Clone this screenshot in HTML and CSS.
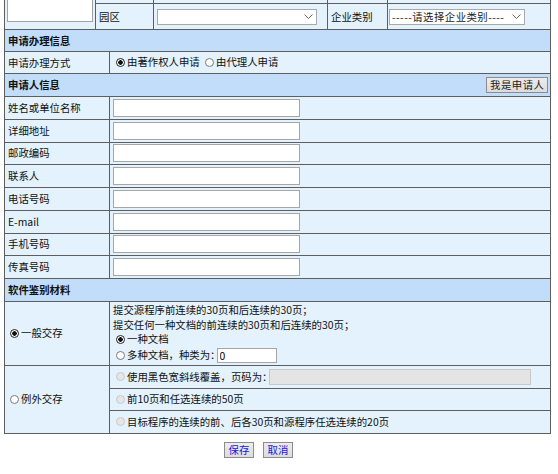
FILE: index.html
```html
<!DOCTYPE html>
<html lang="zh-CN">
<head>
<meta charset="utf-8">
<title>软件登记申请</title>
<link rel="stylesheet" href="styles.css">
</head>
<body>
<div class="page">
  <table class="form">
    <colgroup>
      <col class="c1"><col class="c2"><col class="c3"><col class="c4"><col class="c5"><col class="c6">
    </colgroup>
    <tr class="r-prev">
      <td rowspan="2" class="photo-cell"><div class="photo"></div></td>
      <td colspan="2"></td><td></td><td></td><td></td>
    </tr>
    <tr class="r-park">
      <td colspan="2">园区</td>
      <td><div class="select sel-park"><span></span><svg class="chev" width="9" height="5" viewBox="0 0 9 5"><polyline points="0.5,0.5 4.5,4.5 8.5,0.5" fill="none" stroke="#666" stroke-width="1"/></svg></div></td>
      <td>企业类别</td>
      <td class="sel-cell"><div class="select sel-type"><span>-----请选择企业类别----</span><svg class="chev" width="9" height="5" viewBox="0 0 9 5"><polyline points="0.5,0.5 4.5,4.5 8.5,0.5" fill="none" stroke="#666" stroke-width="1"/></svg></div></td>
    </tr>
    <tr class="r-head"><td colspan="6" class="head">申请办理信息</td></tr>
    <tr class="r-row">
      <td colspan="2">申请办理方式</td>
      <td colspan="4">
        <label class="opt"><input type="radio" name="way" checked>由著作权人申请</label>
        <label class="opt"><input type="radio" name="way">由代理人申请</label>
      </td>
    </tr>
    <tr class="r-head2">
      <td colspan="6" class="head"><div class="head-bar"><span>申请人信息</span><button class="btn btn-me" type="button">我是申请人</button></div></td>
    </tr>
    <tr class="r-field"><td colspan="2">姓名或单位名称</td><td colspan="4"><input class="text" type="text"></td></tr>
    <tr class="r-field"><td colspan="2">详细地址</td><td colspan="4"><input class="text" type="text"></td></tr>
    <tr class="r-field"><td colspan="2">邮政编码</td><td colspan="4"><input class="text" type="text"></td></tr>
    <tr class="r-field"><td colspan="2">联系人</td><td colspan="4"><input class="text" type="text"></td></tr>
    <tr class="r-field"><td colspan="2">电话号码</td><td colspan="4"><input class="text" type="text"></td></tr>
    <tr class="r-field"><td colspan="2">E-mail</td><td colspan="4"><input class="text" type="text"></td></tr>
    <tr class="r-field"><td colspan="2">手机号码</td><td colspan="4"><input class="text" type="text"></td></tr>
    <tr class="r-field"><td colspan="2">传真号码</td><td colspan="4"><input class="text" type="text"></td></tr>
    <tr class="r-head3"><td colspan="6" class="head">软件鉴别材料</td></tr>
    <tr class="r-general">
      <td colspan="2" class="side"><label class="opt"><input type="radio" name="dep" checked>一般交存</label></td>
      <td colspan="4" class="detail">
        <div class="line">提交源程序前连续的30页和后连续的30页；</div>
        <div class="line">提交任何一种文档的前连续的30页和后连续的30页；</div>
        <div class="line"><label class="opt"><input type="radio" name="docs" checked>一种文档</label></div>
        <div class="line line-count"><label class="opt"><input type="radio" name="docs">多种文档，种类为：</label><input class="count" type="text" value="0"></div>
      </td>
    </tr>
    <tr class="r-exc">
      <td colspan="2" rowspan="3" class="side"><label class="opt"><input type="radio" name="dep">例外交存</label></td>
      <td colspan="4"><div class="exc-line"><label class="opt"><input type="radio" name="exc" disabled>使用黑色宽斜线覆盖，页码为：</label><input class="pages" type="text" disabled></div></td>
    </tr>
    <tr class="r-exc"><td colspan="4"><label class="opt"><input type="radio" name="exc" disabled>前10页和任选连续的50页</label></td></tr>
    <tr class="r-exc"><td colspan="4"><label class="opt"><input type="radio" name="exc" disabled>目标程序的连续的前、后各30页和源程序任选连续的20页</label></td></tr>
  </table>
  <div class="actions">
    <button class="btn btn-act" type="button">保存</button>
    <button class="btn btn-act" type="button">取消</button>
  </div>
</div>
</body>
</html>
```
FILE: styles.css
```css
html, body {
  margin: 0;
  padding: 0;
  background: #ffffff;
}
body {
  font-family: "Noto Sans CJK SC", "Noto Sans", sans-serif;
  font-size: 10.4px;
  color: #111;
}
.page {
  margin: -19px 0 0 4px;
  width: 546px;
}
.form {
  border-collapse: collapse;
  table-layout: fixed;
  width: 546px;
}
.c1 { width: 91px; }
.c2 { width: 14px; }
.c3 { width: 44px; }
.c4 { width: 174px; }
.c5 { width: 60px; }
.c6 { width: 163px; }
.form td {
  border: 1px solid #5e5e5e;
  background: #e3f2fd;
  padding: 0 3px;
  line-height: 14px;
  vertical-align: middle;
  white-space: nowrap;
}
.form td.head {
  background: #c1ddfa;
  font-weight: bold;
}
.r-prev { height: 22px; }
.r-park { height: 26px; }
.r-head { height: 22px; }
.r-row { height: 22px; }
.r-head2 { height: 23px; }
.r-field { height: 22.75px; }
.r-head3 { height: 23px; }
.r-general { height: 64px; }
.r-exc { height: 22.67px; }
.form td.photo-cell {
  vertical-align: top;
  padding: 2px 2px;
}
.photo {
  height: 38px;
  border: 1px solid #a3a3a3;
  background: #fff;
  box-sizing: border-box;
}
.form td.sel-cell {
  padding-left: 1px;
}
.select {
  display: flex;
  align-items: center;
  justify-content: space-between;
  height: 16px;
  box-sizing: border-box;
  border: 1px solid #a9a9a9;
  background: #fff;
  padding: 0 3px 0 2px;
  font-size: 10.4px;
  line-height: 14px;
  color: #222;
}
.sel-park { width: 160px; }
.sel-type { width: 136px; letter-spacing: 0.45px; }
.chev { flex: none; }
.opt {
  display: inline-flex;
  align-items: center;
}
input[type="radio"] {
  appearance: none;
  -webkit-appearance: none;
  width: 9px;
  height: 9px;
  margin: 0 2px 0 3px;
  border: 1px solid #7a7a7a;
  border-radius: 50%;
  background: #fff;
  box-sizing: border-box;
  flex: none;
}
input[type="radio"]:checked {
  border-color: #222;
  background: radial-gradient(circle, #111 0 2px, #fff 2.5px);
}
input[type="radio"]:disabled {
  border-color: #c9c9c9;
  background: #e6e6e6;
}
.text {
  display: block;
  width: 187px;
  height: 18px;
  box-sizing: border-box;
  border: 1px solid #a6a6a6;
  background: #fff;
  margin: 0;
  padding: 0 2px;
  font: inherit;
}
.head-bar {
  display: flex;
  align-items: center;
  justify-content: space-between;
}
.btn {
  font-family: inherit;
  font-size: 10.4px;
  line-height: 12px;
  height: 16px;
  padding: 0 3px;
  border: 1px solid #8c8c8c;
  background: linear-gradient(#ececec, #dcdcdc);
  color: #222;
  margin: 0;
  border-radius: 0;
}
.btn-me {
  width: 62px;
  margin-right: -1px;
  letter-spacing: 0.5px;
}
.form td.side {
  padding-left: 2px;
}
.form td.detail {
  padding: 1px 3px 1px;
  vertical-align: top;
}
.line {
  line-height: 14.5px;
  height: 14.5px;
}
.line-count {
  display: flex;
  align-items: center;
  height: 17px;
}
.count {
  width: 60px;
  height: 15px;
  box-sizing: border-box;
  border: 1px solid #a6a6a6;
  background: #fff;
  padding: 0 2px;
  margin: 0 0 0 -4px;
  font: inherit;
  line-height: 13px;
}
.exc-line {
  display: flex;
  align-items: center;
}
.pages {
  width: 262px;
  height: 16px;
  box-sizing: border-box;
  border: 1px solid #c8c8c8;
  background: #e4e4e4;
  margin: 0 0 0 -3px;
  padding: 0;
}
.actions {
  display: flex;
  gap: 9px;
  padding-left: 220px;
  margin-top: 8px;
}
.btn-act {
  width: 30px;
  padding: 0;
  color: #1515e6;
}
```
